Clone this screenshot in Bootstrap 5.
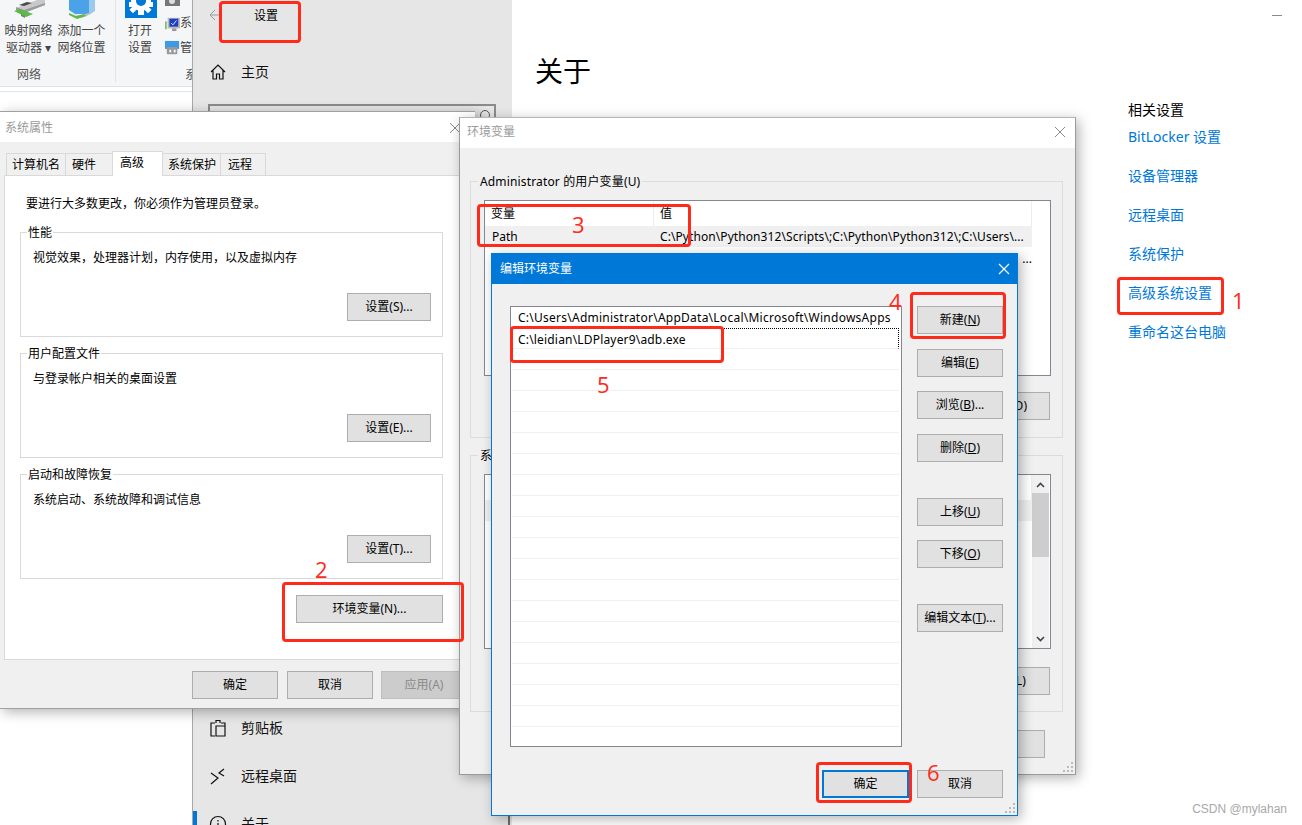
<!DOCTYPE html>
<html lang="zh">
<head>
<meta charset="utf-8">
<title>环境变量</title>
<link href="https://cdn.jsdelivr.net/npm/bootstrap@5.3.0/dist/css/bootstrap.min.css" rel="stylesheet">
<style>
html,body{height:825px;overflow:hidden;background:#fff}
body{position:relative;font:12px/18px "Noto Sans","Noto Sans CJK SC",sans-serif;color:#000}
.desk-win{position:absolute}
/* explorer */
.explorer{left:0;top:0;width:192px;height:111px;overflow:hidden;background:#fff}
.ribbon{height:87px;background:#f5f6f7;border-bottom:1px solid #e1e1e1;color:#444}
.rib-group{height:82px;border-right:1px solid #e2e3e4;width:116px;flex:none}
.rib-sys{width:76px;flex:none;height:82px}
.rib-items{height:64px}
.rib-item{width:53px;text-align:center;line-height:17px}
.rib-item svg{display:block;margin:0 auto}
.rib-net{padding-left:2px}
.rib-label{line-height:18px;color:#555;margin-bottom:-2px;padding-top:0;white-space:nowrap}
.lab-net{padding-left:17px}
.lab-sys{padding-left:69px}
.rib-item2{width:48px;flex:none}
.rib-item2 svg{margin-left:9px}
.rib-col{padding-left:1px;width:28px;flex:none;line-height:17px}
.rib-row{white-space:nowrap;overflow:hidden;line-height:17px}
.rr1{height:16px}
.rr2{height:24px}
.rr3{height:24px}
.rr-txt{margin-top:-1px;color:#444}
.rr2 .rr-txt{margin-top:-2px}
.rib-line{height:6px;margin-top:4px;border-top:1px solid #e5e5e5}
/* settings */
.settings{left:192px;top:0;width:1110px;height:825px;background:#fff}
.side{width:320px;flex:none;background:#e6e6e6;height:825px;overflow:hidden;border-left:1px solid #a8a8a8}
.side-head{height:30px;line-height:30px;padding-left:16px;font-size:12px}
.side-head svg{margin-right:29px}
.side-head span{padding-top:1px}
.side-item{height:48px;font-size:14px;padding-left:15px;position:relative;color:#111}
.side-item svg{width:20px;height:20px;margin-right:13px;flex:none}
.side-home{margin-top:18px}
.side-search{height:36px;width:288px;margin:8px 0 0 15px;border:2px solid #8b8b8b;background:#e6e6e6}
.side-search svg{margin:2px 2px 0 auto;display:block}
.side-gap{height:564px}
.side-on::before{content:"";position:absolute;left:0;top:11px;bottom:11px;width:4px;background:#0078d7}
.main-pane{padding-left:23px}
.page-title{font-size:28px;line-height:38px;font-weight:400;margin:52px 0 0}
.rel-col{width:174px;margin-left:auto;padding-top:100px;font-size:14px;line-height:20px}
.rel-col a{color:#0078d7;text-decoration:none;display:block;margin-top:19px}
.rel-col a.first{margin-top:7px}
.min-bar{position:absolute;left:1080px;top:15px;width:10px;height:1px;background:#8a8a8a}
.side-fix{position:absolute;left:508px;top:775px;width:2px;height:50px;background:#6d6d6d}
/* dialogs */
.dlg{background:#f0f0f0;box-shadow:3px 3px 12px rgba(0,0,0,.3);display:flex;flex-direction:column}
.dlg-title{background:#fff;flex:none;color:#9a9a9a;padding-left:5px;display:flex;align-items:center;justify-content:space-between}
.dlg-x{display:block;margin-right:14px}
.sys{left:0;top:111px;width:475px;height:598px;border-bottom:1px solid #a0a0a0;border-top:1px solid #a0a0a0}
.sys .dlg-title{height:30px;padding-top:2px}
.stabs{margin:9px 0 0 6px;height:24px;align-items:flex-end;flex-wrap:nowrap}
.stab{height:22px;border:1px solid #d9d9d9;border-bottom:0;margin-right:-1px;line-height:21px;text-align:left;padding:0 0 0 5px;color:#000;background:#f0f0f0}
.stab:hover,.stab:focus{color:#000}
.stab-on{height:25px;background:#fff;position:relative;z-index:1;margin-bottom:-1px;line-height:22px;padding-left:7px}
.w59{width:60px}.w47{width:48px;padding-left:6px}.w51{width:51px}.w58{width:59px;padding-left:5px}.w46{width:46px;padding-left:7px}
.spanel{margin-left:4px;background:#fff;border:1px solid #d9d9d9;height:485px;padding:19px 0 0 15px}
.spanel-in{width:423px}
.hint{margin:0 0 19px 6px}
.gbox{border:1px solid #d9d9d9;height:105px;margin-bottom:16px;padding:0 11px 15px 12px;display:flex;flex-direction:column}
.gbox-t{margin:-9px 0 7px -6px;padding:0 1px;background:#fff;align-self:flex-start;line-height:18px;height:18px}
.wbtn{--bs-btn-padding-x:0;--bs-btn-padding-y:0;--bs-btn-font-size:12px;--bs-btn-line-height:26px;--bs-btn-border-radius:0;--bs-btn-bg:#e1e1e1;--bs-btn-border-color:#adadad;--bs-btn-color:#000;--bs-btn-hover-bg:#e1e1e1;--bs-btn-hover-border-color:#adadad;--bs-btn-hover-color:#000;width:86px;height:28px;flex:none;white-space:nowrap}
.wbtn-off,.wbtn-off:hover{--bs-btn-bg:#ccc;--bs-btn-border-color:#bfbfbf;--bs-btn-color:#8a8a8a;--bs-btn-hover-bg:#ccc;--bs-btn-hover-color:#8a8a8a;--bs-btn-hover-border-color:#bfbfbf;margin-left:-1px}
.wbtn-main,.wbtn-main:hover{--bs-btn-border-color:#0078d7;--bs-btn-hover-border-color:#0078d7;border-width:2px;width:87px;line-height:24px;margin-right:8px}
.w84{width:84px}.w147{width:147px}
.sfoot{padding:11px 0 0 192px;gap:9px}
.grip{position:absolute;right:2px;bottom:2px;display:block}
/* env */
.env{left:459px;top:117px;width:617px;height:658px;border:1px solid #9a9a9a;border-top-color:#b5b5b5}
.env .dlg-title{height:30px;padding-left:7px;padding-bottom:2px}
.env .dlg-x{margin-right:9px}
.egroup{margin:33px 0 0 10px;width:593px;border:1px solid #dcdcdc;padding:0 11px 0 13px}
.eg2{margin-top:17px;height:257px}
.eg1{height:257px}
.egroup-t{margin:-9px 0 0 -6px;background:#f0f0f0;height:18px;line-height:18px;align-self:flex-start;display:inline-block;padding:0 2px;letter-spacing:.15px}
.vlist{background:#fff;border:1px solid #828790;height:176px;margin-top:9px;padding:0}
.vhead{height:25px;width:547px;border-right:1px solid #ededed}
.vname{width:169px;padding-left:6px;flex:none;line-height:25px;border-right:1px solid #ededed;height:25px}
.vval{padding-left:6px;line-height:25px}
.vrow{height:21px;width:547px;line-height:21px}
.vrow-on{background:#f0f0f0}
.vrow-on .vval{letter-spacing:.08px;white-space:nowrap}
.vrow .vname,.vrow .vval{line-height:21px;height:21px;border:0}
.vrow .vname{padding-left:7px}
.vrow .vval{padding-left:6px}
.vmore{text-align:right;padding-right:0;line-height:24px}
.ebtns{margin-top:16px;margin-right:1px}
.vlist2{height:175px;margin-top:9px}
.vhead2{height:25px}
.vcol{width:548px}
.vrow2{height:21px;width:547px;background:#f0f0f0}
.vscroll{width:17px;margin-left:auto;margin-right:1px;flex:none;display:flex;flex-direction:column;background:#f0f0f0}
.vscroll svg{display:block;margin:7px auto 5px}
.vthumb{height:64px;background:#cdcdcd}
.vscroll .sp{flex:1}
.vscroll svg.sc2{margin:5px auto 6px}
.ebtns2{margin-top:18px;margin-right:1px}
.efoot{margin:18px 0 0 0;padding-right:30px}
/* edit */
.edit{left:491px;top:253px;width:527px;height:563px;border:1px solid #0078d7;border-top:0}
.edit-title{height:31px;background:#0078d7;color:#fff;padding-left:8px;display:flex;align-items:center;justify-content:space-between;flex:none}
.edit-title .dlg-x{margin-right:7px}
.edit-body{padding:22px 14px 0 18px}
.plist{width:392px;height:441px;border:1px solid #828790;background:#fff;overflow:hidden;flex:none}
.prow{height:21px;line-height:20px;padding-left:6px;margin:0 2px 0 1px;border-bottom:1px solid #f0f0f0;white-space:nowrap}
.prow-first{border-bottom-color:transparent;line-height:22px;letter-spacing:.25px}
.prow-sel{border:1px dotted #000;padding-left:5px;height:21px;line-height:21px;border-bottom:1px solid #f0f0f0;letter-spacing:.18px}
.pbtns{margin-left:15px}
.m14{margin-top:14px}.m15{margin-top:15px}.m36{margin-top:36px}
.efoot2{margin-top:23px}
.edit-body u{text-decoration:underline}
/* annotation */
.mark-box{position:absolute;border:3px solid #ff2a1a;border-radius:4px;z-index:10}
.mb1{left:1117px;top:277px;width:107px;height:38px}
.mb2{left:282px;top:582px;width:182px;height:60px}
.mb3{left:477px;top:204px;width:214px;height:43px}
.mb4{left:910px;top:292px;width:96px;height:47px}
.mb5{left:510px;top:326px;width:214px;height:37px}
.mb6{left:816px;top:762px;width:96px;height:41px}
.mb0{left:219px;top:1px;width:82px;height:42px}
.mark-no{position:absolute;z-index:11;color:#ff2a1a;font:22px/24px "Open Sans",sans-serif}
.n1{left:1232px;top:288px}
.n2{left:315px;top:557px}
.n3{left:572px;top:212px}
.n4{left:889px;top:289px}
.n5{left:597px;top:372px}
.n6{left:927px;top:760px}
.wm{position:absolute;right:15px;top:801px;z-index:12;color:#a8a8a8;font:12px/16px "Liberation Sans",sans-serif}
</style>
</head>
<body>

<div class="desk-win explorer">
  <div class="ribbon d-flex">
    <div class="rib-group d-flex flex-column">
      <div class="rib-items d-flex rib-net">
        <div class="rib-item">
          <svg width="34" height="22" viewBox="0 0 32 22"><path d="M3 8 24 0h8v5L11 13 3 10z" fill="#c9c9c9"/><path d="M3 7l8 3 21-7v2L11 13 3 10z" fill="#9b9b9b"/><path d="M6 5l8-3 5 1-8 3z" fill="#4a4a4a"/><path d="M1 11l6-2 13 5-7 3z" fill="#5cba4a"/><path d="M8 14l4 2v2l-4-2z" fill="#7d7d7d"/></svg>
          映射网络<br>驱动器 <span>▾</span>
        </div>
        <div class="rib-item">
          <svg width="30" height="22" viewBox="0 0 30 22"><path d="M2 0h20v14H8l-6-4z" fill="#4aa3e8"/><path d="M22 0h6v11l-6 4z" fill="#9cc9ec"/><path d="M4 12l8 4 13-4-5 4-6 2z" fill="#bdbdbd"/><path d="M2 13l7 3 8-2 2 2-9 3-8-4z" fill="#5cba4a"/></svg>
          添加一个<br>网络位置
        </div>
      </div>
      <div class="rib-label lab-net mt-auto">网络</div>
    </div>
    <div class="rib-sys d-flex flex-column">
      <div class="rib-items d-flex">
        <div class="rib-item rib-item2">
          <svg width="32" height="22" viewBox="0 0 32 22"><rect width="32" height="18" fill="#0078d7"/><g fill="#fff"><circle cx="16" cy="1" r="10"/><rect x="13" y="9" width="6" height="6"/><rect x="4" y="2" width="6" height="5" /><rect x="22" y="2" width="6" height="5"/><rect x="6" y="7" width="5" height="5" transform="rotate(45 8 9)"/><rect x="21" y="7" width="5" height="5" transform="rotate(45 23 9)"/></g><circle cx="16" cy="1" r="5" fill="#0078d7"/></svg>
          打开<br>设置
        </div>
        <div class="rib-col">
          <div class="rib-row rr1"><svg width="17" height="6" viewBox="0 0 17 6" class="d-block"><rect width="15" height="6" fill="#777"/><circle cx="7" cy="1" r="3" fill="#ddd"/></svg></div>
          <div class="rib-row rr2 d-flex align-items-start"><svg width="20" height="16" viewBox="0 0 17 16" class="flex-none"><rect x="3" y="1" width="14" height="12" fill="#b9b9b9"/><rect x="5" y="2" width="10" height="9" fill="#1a3fc4"/><path d="M7 7l2 2 4-5" stroke="#fff" fill="none"/><rect x="0" y="5" width="2" height="9" fill="#7ec06c"/><rect x="8" y="13" width="5" height="3" fill="#999"/></svg><span class="rr-txt">系</span></div>
          <div class="rib-row rr3 d-flex align-items-start"><svg width="20" height="16" viewBox="0 0 17 16"><rect width="16" height="9" fill="#3d9be6"/><rect x="2" y="7" width="12" height="8" rx="1" fill="#9a9a9a"/><rect x="5" y="10" width="2" height="3" fill="#fff"/><rect x="10" y="10" width="2" height="3" fill="#fff"/></svg><span class="rr-txt">管</span></div>
        </div>
      </div>
      <div class="rib-label lab-sys mt-auto">系</div>
    </div>
  </div>
  <div class="rib-line"></div>
</div>

<div class="desk-win settings d-flex">
  <div class="side">
    <div class="side-head d-flex align-items-center">
      <svg width="12" height="12" viewBox="0 0 12 12" fill="none" stroke="#9a9a9a"><path d="M6 1 1 6l5 5M1 6h11"/></svg>
      <span class="ms-1">设置</span>
    </div>
    <div class="side-item side-home d-flex align-items-center">
      <svg viewBox="0 0 20 20" fill="none" stroke="#111" stroke-width="1.2"><path d="M3 10 10 3l7 7M5 8.5V17h3.500v-5h3v5H15V8.500"/></svg>
      主页
    </div>
    <div class="side-search"><svg width="16" height="16" viewBox="0 0 16 16" fill="none" stroke="#555"><circle cx="9" cy="7" r="4.500"/><path d="M5.500 10.500 2 14"/></svg></div>
    <div class="side-gap"></div>
    <div class="side-item d-flex align-items-center">
      <svg viewBox="0 0 20 20" fill="none" stroke="#111" stroke-width="1.2"><path d="M7 5H3v13h4M13 5h4v13H8V8h9M8 5V2.500h4V5"/></svg>
      剪贴板
    </div>
    <div class="side-item d-flex align-items-center">
      <svg viewBox="0 0 20 20" fill="none" stroke="#111" stroke-width="1.2"><path d="M3 7l7 5-7 6M16 3l-5 4 5 3"/></svg>
      远程桌面
    </div>
    <div class="side-item side-on d-flex align-items-center">
      <svg viewBox="0 0 20 20" fill="none" stroke="#111" stroke-width="1.2"><circle cx="10" cy="10" r="7.500"/><path d="M10 9v5M10 6v1.400"/></svg>
      关于
    </div>
  </div>
  <div class="main-pane flex-grow-1 d-flex">
    <h1 class="page-title">关于</h1>
    <div class="rel-col">
      <div>相关设置</div>
      <a class="first" href="#">BitLocker 设置</a>
      <a href="#">设备管理器</a>
      <a href="#">远程桌面</a>
      <a href="#">系统保护</a>
      <a href="#">高级系统设置</a>
      <a href="#">重命名这台电脑</a>
    </div>
  </div>
  <div class="min-bar"></div>
</div>
<div class="side-fix"></div>

<div class="desk-win dlg sys">
  <div class="dlg-title">系统属性
    <svg class="dlg-x" width="12" height="12" viewBox="0 0 12 12" stroke="#8a8a8a"><path d="M1 1l10 10M11 1 1 11"/></svg>
  </div>
  <ul class="nav stabs">
    <li><a class="nav-link stab w59" href="#">计算机名</a></li>
    <li><a class="nav-link stab w47" href="#">硬件</a></li>
    <li><a class="nav-link stab stab-on w51" href="#">高级</a></li>
    <li><a class="nav-link stab w58" href="#">系统保护</a></li>
    <li><a class="nav-link stab w46" href="#">远程</a></li>
  </ul>
  <div class="spanel">
    <div class="spanel-in d-flex flex-column">
      <p class="hint">要进行大多数更改，你必须作为管理员登录。</p>
      <div class="gbox">
        <span class="gbox-t">性能</span>
        <span>视觉效果，处理器计划，内存使用，以及虚拟内存</span>
        <button class="btn wbtn w84 mt-auto align-self-end" type="button">设置(S)...</button>
      </div>
      <div class="gbox">
        <span class="gbox-t">用户配置文件</span>
        <span>与登录帐户相关的桌面设置</span>
        <button class="btn wbtn w84 mt-auto align-self-end" type="button">设置(E)...</button>
      </div>
      <div class="gbox">
        <span class="gbox-t">启动和故障恢复</span>
        <span>系统启动、系统故障和调试信息</span>
        <button class="btn wbtn w84 mt-auto align-self-end" type="button">设置(T)...</button>
      </div>
      <button class="btn wbtn w147 align-self-end" type="button">环境变量(N)...</button>
    </div>
  </div>
  <div class="sfoot d-flex">
    <button class="btn wbtn" type="button">确定</button>
    <button class="btn wbtn" type="button">取消</button>
    <button class="btn wbtn wbtn-off" type="button">应用(A)</button>
  </div>
</div>

<div class="desk-win dlg env">
  <div class="dlg-title">环境变量
    <svg class="dlg-x" width="12" height="12" viewBox="0 0 12 12" stroke="#8a8a8a"><path d="M1 1l10 10M11 1 1 11"/></svg>
  </div>
  <div class="egroup eg1 d-flex flex-column">
    <span class="egroup-t">Administrator 的用户变量(U)</span>
    <div class="vlist">
      <div class="vhead d-flex"><div class="vname">变量</div><div class="vval">值</div></div>
      <div class="vrow vrow-on d-flex"><div class="vname">Path</div><div class="vval">C:\Python\Python312\Scripts\;C:\Python\Python312\;C:\Users\...</div></div>
      <div class="vrow vmore">...</div>
    </div>
    <button class="btn wbtn ebtns align-self-end" type="button">删除(D)</button>
  </div>
  <div class="egroup eg2 d-flex flex-column">
    <span class="egroup-t">系统变量(S)</span>
    <div class="vlist vlist2 d-flex">
      <div class="vcol">
        <div class="vhead vhead2 d-flex"><div class="vname">变量</div><div class="vval">值</div></div>
        <div class="vrow2"></div>
      </div>
      <div class="vscroll">
        <svg width="9" height="6" viewBox="0 0 9 6" fill="none" stroke="#444" stroke-width="1.6"><path d="M1 5l3.500-3.500L8 5"/></svg>
        <div class="vthumb"></div>
        <div class="sp"></div>
        <svg class="sc2" width="9" height="6" viewBox="0 0 9 6" fill="none" stroke="#444" stroke-width="1.6"><path d="M1 1l3.500 3.500L8 1"/></svg>
      </div>
    </div>
    <button class="btn wbtn ebtns2 align-self-end" type="button">删除(L)</button>
  </div>
  <div class="efoot d-flex justify-content-end">
    <button class="btn wbtn" type="button">取消</button>
  </div>
  <svg class="grip" width="10" height="10" viewBox="0 0 10 10" fill="#bbb"><rect x="8" y="0" width="2" height="2"/><rect x="4" y="4" width="2" height="2"/><rect x="8" y="4" width="2" height="2"/><rect x="0" y="8" width="2" height="2"/><rect x="4" y="8" width="2" height="2"/><rect x="8" y="8" width="2" height="2"/></svg>
</div>

<div class="desk-win dlg edit">
  <div class="edit-title">编辑环境变量
    <svg class="dlg-x" width="12" height="12" viewBox="0 0 12 12" stroke="#fff" stroke-width="1.2"><path d="M1 1l10 10M11 1 1 11"/></svg>
  </div>
  <div class="edit-body">
    <div class="d-flex">
      <div class="plist">
        <div class="prow prow-first">C:\Users\Administrator\AppData\Local\Microsoft\WindowsApps</div>
        <div class="prow prow-sel">C:\leidian\LDPlayer9\adb.exe</div>
        <div class="prow"></div><div class="prow"></div><div class="prow"></div><div class="prow"></div>
        <div class="prow"></div><div class="prow"></div><div class="prow"></div><div class="prow"></div>
        <div class="prow"></div><div class="prow"></div><div class="prow"></div><div class="prow"></div>
        <div class="prow"></div><div class="prow"></div><div class="prow"></div><div class="prow"></div>
        <div class="prow"></div><div class="prow"></div>
      </div>
      <div class="pbtns d-flex flex-column">
        <button class="btn wbtn" type="button">新建(<u>N</u>)</button>
        <button class="btn wbtn m15" type="button">编辑(<u>E</u>)</button>
        <button class="btn wbtn m14" type="button">浏览(<u>B</u>)...</button>
        <button class="btn wbtn m15" type="button">删除(<u>D</u>)</button>
        <button class="btn wbtn m36" type="button">上移(<u>U</u>)</button>
        <button class="btn wbtn m14" type="button">下移(<u>O</u>)</button>
        <button class="btn wbtn m36" type="button">编辑文本(<u>T</u>)...</button>
      </div>
    </div>
    <div class="efoot2 d-flex justify-content-end">
      <button class="btn wbtn wbtn-main" type="button">确定</button>
      <button class="btn wbtn" type="button">取消</button>
    </div>
  </div>
  <svg class="grip" width="10" height="10" viewBox="0 0 10 10" fill="#bbb"><rect x="8" y="0" width="2" height="2"/><rect x="4" y="4" width="2" height="2"/><rect x="8" y="4" width="2" height="2"/><rect x="0" y="8" width="2" height="2"/><rect x="4" y="8" width="2" height="2"/><rect x="8" y="8" width="2" height="2"/></svg>
</div>

<div class="mark-box mb0"></div>
<div class="mark-box mb1"></div><span class="mark-no n1">1</span>
<div class="mark-box mb2"></div><span class="mark-no n2">2</span>
<div class="mark-box mb3"></div><span class="mark-no n3">3</span>
<div class="mark-box mb4"></div><span class="mark-no n4">4</span>
<div class="mark-box mb5"></div><span class="mark-no n5">5</span>
<div class="mark-box mb6"></div><span class="mark-no n6">6</span>
<div class="wm">CSDN @mylahan</div>

<script src="https://cdn.jsdelivr.net/npm/bootstrap@5.3.0/dist/js/bootstrap.bundle.min.js"></script>
</body>
</html>
